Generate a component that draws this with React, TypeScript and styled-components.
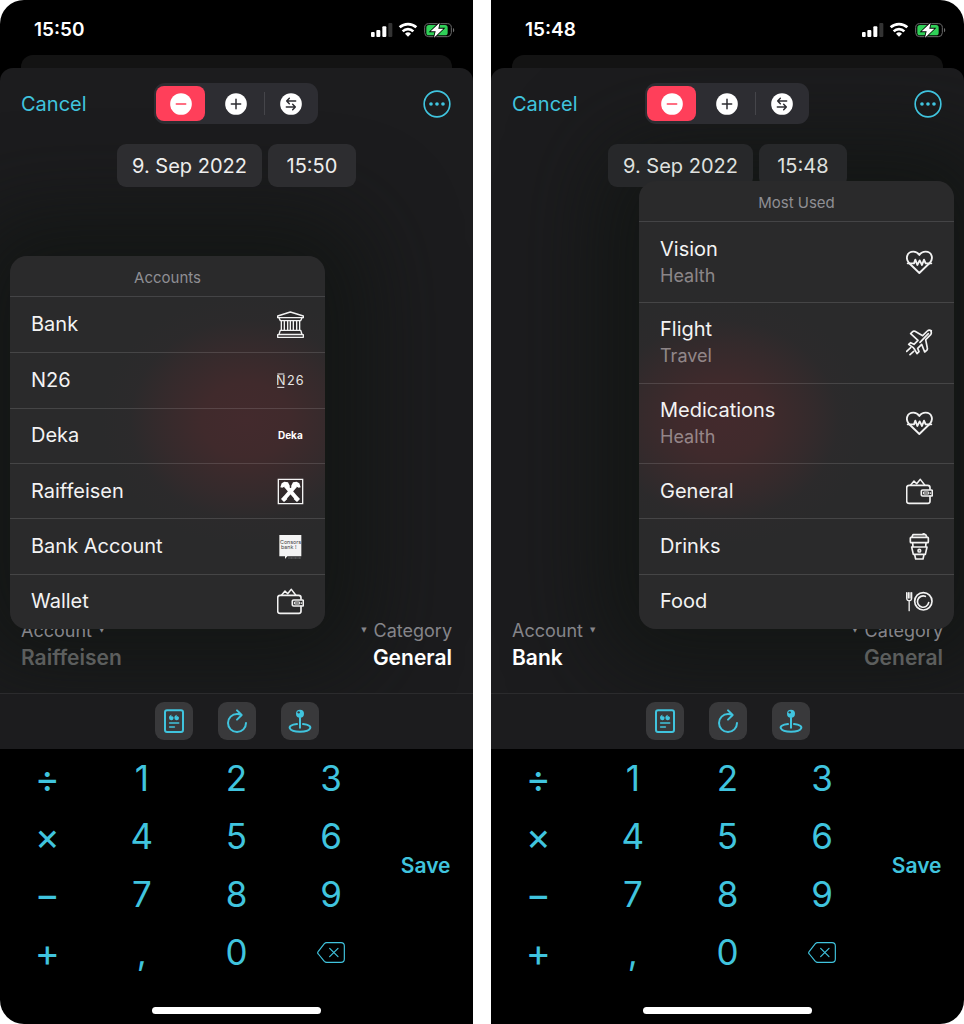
import React from "react";
import styled, { createGlobalStyle } from "styled-components";

const GlobalStyle = createGlobalStyle`
  * { box-sizing: border-box; }
  body {
    margin: 0;
    background: #fff;
    font-family: Inter, "Liberation Sans", sans-serif;
    -webkit-font-smoothing: antialiased;
  }
  button {
    margin: 0;
    padding: 0;
    border: 0;
    background: none;
    font: inherit;
    color: inherit;
    cursor: pointer;
  }
  svg { display: block; flex: none; }
`;

const ACCENT = "#40c4de";

const Page = styled.main`
  display: grid;
  grid-template-columns: 1fr 1fr;
  gap: 18px;
  min-height: 100vh;
`;

const Phone = styled.section<{ $side: "left" | "right" }>`
  display: flex;
  flex-direction: column;
  min-width: 0;
  overflow: hidden;
  background: #000;
  color: #fff;
  border-radius: ${(p) => (p.$side === "left" ? "24px 0 0 24px" : "0 24px 24px 0")};
`;

const StatusBar = styled.header`
  display: flex;
  justify-content: space-between;
  align-items: center;
  height: 55px;
  padding: 4px 18px 0 34px;
`;

const Clock = styled.time`
  font-size: 19px;
  font-weight: 600;
`;

const BackCard = styled.div`
  height: 13px;
  margin: 0 21px;
  border-radius: 12px 12px 0 0;
  background: #131313;
`;

const Sheet = styled.div`
  position: relative;
  isolation: isolate;
  display: flex;
  flex-direction: column;
  flex: 1;
  overflow: hidden;
  border-radius: 13px 13px 0 0;
  background: #1c1c1e;
`;

const SheetHeader = styled.div`
  display: grid;
  grid-template-columns: 1fr auto 1fr;
  align-items: center;
  padding: 15px 22px 0 21px;
`;

const CancelButton = styled.button`
  justify-self: start;
  font-size: 20px;
  line-height: 24px;
  color: ${ACCENT};
`;

const MoreButton = styled.button`
  justify-self: end;
  color: ${ACCENT};
`;

const Segments = styled.div`
  display: grid;
  grid-template-columns: repeat(3, 1fr);
  gap: 6px;
  width: 164px;
  height: 41px;
  padding: 3px 2px;
  border-radius: 11px;
  background: #2d2d32;
`;

const Segment = styled.button<{ $active?: boolean; $divided?: boolean }>`
  position: relative;
  display: grid;
  place-items: center;
  border-radius: 8px;
  background: ${(p) => (p.$active ? "#ff3f5a" : "none")};
  color: ${(p) => (p.$active ? "#ff3f5a" : "#2d2d32")};
  &::before {
    content: "";
    position: absolute;
    left: -3px;
    top: 6px;
    bottom: 6px;
    width: 1px;
    background: ${(p) => (p.$divided ? "#45454a" : "none")};
  }
`;

const DateRow = styled.div`
  display: flex;
  justify-content: center;
  gap: 6px;
  margin-top: 20px;
`;

const Pill = styled.button<{ $shaded: boolean }>`
  min-width: 88px;
  height: 43px;
  padding: 0 15px;
  border-radius: 9px;
  background: ${(p) => (p.$shaded ? "#27282a" : "#2d2d30")};
  font-size: 20px;
  color: ${(p) => (p.$shaded ? "#dfe0df" : "#ededed")};
`;

const Fields = styled.div`
  display: flex;
  justify-content: space-between;
  margin-top: auto;
  padding: 0 21px 22px;
`;

const FieldButton = styled.button<{ $end?: boolean }>`
  display: flex;
  flex-direction: column;
  align-items: ${(p) => (p.$end ? "flex-end" : "flex-start")};
`;

const FieldLabel = styled.span<{ $end?: boolean }>`
  display: flex;
  flex-direction: ${(p) => (p.$end ? "row-reverse" : "row")};
  align-items: center;
  gap: 7px;
  font-size: 18px;
  line-height: 27px;
  color: #85858a;
`;

const Caret = styled.span`
  font-family: "DejaVu Sans", sans-serif;
  font-size: 7px;
`;

const FieldValue = styled.span<{ $dim?: boolean }>`
  font-size: 21px;
  font-weight: 600;
  line-height: 27px;
  color: ${(p) => (p.$dim ? "#5c5e5d" : "#fff")};
`;

const Menu = styled.div<{ $side: "left" | "right"; $height: number }>`
  position: absolute;
  bottom: 64px;
  ${(p) => p.$side}: 10px;
  display: flex;
  flex-direction: column;
  width: 315px;
  height: ${(p) => p.$height}px;
  overflow: hidden;
  border-radius: 17px;
  background:
    radial-gradient(
      ellipse 145px 125px at ${(p) => (p.$side === "left" ? "236px" : "84px")} calc(100% - 209px),
      #432a2d 0%, #402a2c 30%, rgba(56, 42, 44, 0.75) 60%, rgba(46, 42, 44, 0.4) 80%, rgba(42, 42, 43, 0) 100%
    ),
    #2a2a2b;
`;

const MenuShade = styled.div<{ $side: "left" | "right"; $height: number }>`
  position: absolute;
  z-index: -1;
  bottom: 64px;
  ${(p) => p.$side}: 10px;
  width: 315px;
  height: ${(p) => p.$height}px;
  border-radius: 17px;
  box-shadow: 0 0 90px 40px rgba(16, 20, 17, 0.75);
  pointer-events: none;
`;

const MenuTitle = styled.h2`
  flex: none;
  margin: 0;
  height: 41px;
  border-bottom: 1px solid #444446;
  font-size: 15px;
  font-weight: 400;
  line-height: 43px;
  text-align: center;
  color: #8f8f94;
`;

const MenuItem = styled.button<{ $tall?: boolean }>`
  display: flex;
  flex: 1 0 ${(p) => (p.$tall ? 80 : 55)}px;
  justify-content: space-between;
  align-items: center;
  padding: 0 21px;
  text-align: left;
  & + & { border-top: 1px solid rgba(255, 255, 255, 0.13); }
`;

const MenuText = styled.span`
  display: grid;
  font-size: 20px;
  line-height: 27px;
  color: #f3f3f3;
`;

const MenuSub = styled.span`
  font-size: 18px;
  line-height: 26px;
  color: rgba(235, 225, 228, 0.52);
`;

const Toolbar = styled.div`
  display: flex;
  justify-content: center;
  gap: 25px;
  padding: 8px 0 9px;
  border-top: 1px solid #2b2b2d;
  background: #1c1c1e;
`;

const ToolButton = styled.button`
  width: 38px;
  height: 38px;
  border-radius: 9px;
  background: #39393b;
  color: ${ACCENT};
`;

const Keypad = styled.div`
  display: grid;
  grid-template-columns: repeat(5, 1fr);
  grid-auto-rows: 58px;
  color: ${ACCENT};
`;

const Key = styled.button<{ $operator?: boolean }>`
  display: grid;
  place-items: center;
  font-size: ${(p) => (p.$operator ? 38 : 35)}px;
  line-height: 58px;
`;

const SaveKey = styled.button`
  grid-column: 5;
  grid-row: 1 / span 4;
  font-size: 21px;
  font-weight: 600;
`;

const HomeArea = styled.footer`
  display: flex;
  justify-content: center;
  padding: 26px 0 10px;
`;

const HomeBar = styled.div`
  width: 169px;
  height: 7px;
  border-radius: 4px;
  background: #fff;
`;

/* ---------- icons ---------- */

const StatusIcons = () => (
  <svg width="85" height="18" viewBox="0 0 255 54" aria-hidden="true">
    <g fill="#fff">
      <rect x="3" y="33" width="11" height="15" rx="3" />
      <rect x="19" y="27" width="12" height="21" rx="3" />
      <rect x="37" y="16" width="12" height="32" rx="3" />
      <rect x="55" y="6" width="12" height="42" rx="3" fill="#333" />
    </g>
    <g fill="none" stroke="#fff" strokeWidth="8">
      <path d="M89 19a37 37 0 0 1 50 0" />
      <path d="M98 31a23 23 0 0 1 32 0" />
    </g>
    <path d="M105 38a13 13 0 0 1 18 0l-9 9z" fill="#fff" />
    <rect x="164" y="8" width="80" height="39" rx="12" fill="none" stroke="#6c6c6c" strokeWidth="3" />
    <path d="M249 21v13c5-2 5-11 0-13z" fill="#6c6c6c" />
    <rect x="169" y="12" width="64" height="31" rx="8" fill="#30d158" />
    <path d="M209 5L182 31h15l-5 19 28-27h-15z" fill="#fff" stroke="#000" strokeWidth="5" paintOrder="stroke" />
  </svg>
);

const MoreIcon = () => (
  <svg width="28" height="28" viewBox="0 0 84 84" aria-hidden="true">
    <circle cx="42" cy="42" r="38.500" fill="none" stroke="currentColor" strokeWidth="5" />
    <g fill="currentColor">
      <circle cx="24" cy="42" r="5.500" />
      <circle cx="42" cy="42" r="5.500" />
      <circle cx="60" cy="42" r="5.500" />
    </g>
  </svg>
);

const SegmentIcon = ({ d }: { d: string }) => (
  <svg width="22" height="22" viewBox="0 0 66 66" aria-hidden="true">
    <circle cx="33" cy="33" r="32.500" fill="#fff" />
    <path d={d} fill="none" stroke="currentColor" strokeWidth="4.500" strokeLinecap="round" strokeLinejoin="round" />
  </svg>
);

const Glyph = ({ children, width = 4 }: { children: React.ReactNode; width?: number }) => (
  <svg
    width="27"
    height="27"
    viewBox="0 0 81 81"
    fill="none"
    stroke="#f2f2f2"
    strokeWidth={width}
    strokeLinejoin="round"
    strokeLinecap="round"
    aria-hidden="true"
  >
    {children}
  </svg>
);

const BankIcon = () => (
  <Glyph width={4}>
    <path d="M40 3L2 15v5h77v-5z M6 21l4 8h61l4-8" />
    <path d="M13 29v28M22 29v28M32 29v28M40 29v28M49 29v28M59 29v28M68 29v28" />
    <path d="M10 58h61l4 12H6z M2 71h77v8H2z" />
  </Glyph>
);

const N26Icon = () => (
  <Glyph>
    <path d="M1 21h21M1 61h21" strokeWidth="3" strokeLinecap="butt" />
    <g fill="#e6e6e6" stroke="none" fontFamily="Inter, sans-serif" fontSize="38">
      <text x="-3" y="55">N</text>
      <text x="30" y="55">2</text>
      <text x="56" y="55">6</text>
    </g>
  </Glyph>
);

const DekaIcon = () => (
  <Glyph>
    <text x="40" y="51" textAnchor="middle" fill="#fff" stroke="none" fontFamily="Inter, sans-serif" fontWeight="700" fontSize="30">
      Deka
    </text>
  </Glyph>
);

const RaiffeisenIcon = () => (
  <Glyph width={4}>
    <path d="M4 4h73v73H4z" strokeLinejoin="miter" />
    <path d="M25 22l38 44M56 22L18 66" stroke="#fff" strokeWidth="12" strokeLinecap="butt" />
    <path
      d="M10 28l4-12 8-5 11 2 6 12-9 9-6-9-8 4zM71 28l-4-12-8-5-11 2-6 12 9 9 6-9 8 4zM12 63l10-9 9 9-10 9zM69 63l-10-9-9 9 10 9z"
      fill="#fff"
      stroke="none"
    />
  </Glyph>
);

const ConsorsIcon = () => (
  <Glyph>
    <path d="M7 6h66v64H31l-7 8v-8H7z" fill="#f4f4f4" stroke="none" />
    <path d="M34 75h38" stroke="#77787a" strokeWidth="3" strokeDasharray="3 1" strokeLinecap="butt" />
    <g fill="#444" stroke="none" fontFamily="Inter, sans-serif" fontSize="16">
      <text x="9" y="32">Consors</text>
      <text x="12" y="49">bank !</text>
    </g>
  </Glyph>
);

const WalletIcon = () => (
  <Glyph width={5}>
    <path d="M72 34v-5q0-7-7-7H9q-7 0-7 7v40q0 7 7 7h57q6 0 6-6V54" />
    <path d="M14 21l10-12 8 8 11-13 13 17" strokeWidth="4.500" />
    <path d="M50 36h26q3 0 3 3v12q0 3-3 3H50q-4 0-4-3V39q0-3 4-3z" />
    <path d="M54 42h14v6H54z M73 44v3" strokeWidth="3" />
  </Glyph>
);

const HeartIcon = () => (
  <Glyph width={5.5}>
    <path d="M40 72L9 42C-3 28 3 8 22 8c8 0 14 4 18 10C44 12 51 8 59 8c18 0 25 20 12 34z" />
    <path d="M5 43h19l4-11 6 16 7-14 7 14 6-16 5 11h17" />
  </Glyph>
);

const PlaneIcon = () => (
  <Glyph width={5}>
    <path d="M76 5q-7-4-12 1L50 20 27 7q-4-2-7 1l-6 6 22 20-12 12-10-5-6 5 14 10 3 4 8 14 6-6-4-10 12-12 9 23 6-5q3-3 2-7l-5-25 15-15q4-5 0-12z" />
    <path d="M67 14L42 40M2 67l12-11M12 77l11-10" />
  </Glyph>
);

const CupIcon = () => (
  <Glyph width={5}>
    <path d="M17 13l4-8h38l4 8M15 13h50q2 0 2 3v10q0 3-2 3H15q-2 0-2-3V16q0-3 2-3zM50 4l4-2" />
    <path d="M20 30l1 11M60 30l-1 11M17 42h46l-5 22H22zM26 65l3 13h22l3-13" />
    <circle cx="40" cy="53" r="4" />
  </Glyph>
);

const FoodIcon = () => (
  <Glyph width={5}>
    <path d="M2 14v16q0 7 6 8h3q6-1 6-8V14M7 14v16M12 14v16M9.500 38v30" strokeWidth="4" />
    <circle cx="52" cy="40" r="26" />
    <path d="M58 25a17 17 0 1 0 10 19" />
  </Glyph>
);

const ToolGlyph = ({ children }: { children: React.ReactNode }) => (
  <svg width="38" height="38" viewBox="0 0 114 114" fill="none" stroke="currentColor" strokeWidth="6" strokeLinecap="round" strokeLinejoin="round" aria-hidden="true">
    {children}
  </svg>
);

const NoteIcon = () => (
  <ToolGlyph>
    <rect x="30" y="25" width="54" height="65" rx="6" />
    <path d="M44 63h27M44 75h14" strokeWidth="5" />
    <path
      d="M56 48a7 7 0 1 1-14-1c0-5 4-9 9-9l-4 5c5-1 9 1 9 5zM72 48a7 7 0 1 1-14-1c0-5 4-9 9-9l-4 5c5-1 9 1 9 5z"
      fill="currentColor"
      stroke="none"
    />
  </ToolGlyph>
);

const RepeatIcon = () => (
  <ToolGlyph>
    <path d="M84 63a27 27 0 1 1-27-27q7 0 13 3M57 25l14 14-14 14" />
  </ToolGlyph>
);

const PinIcon = () => (
  <ToolGlyph>
    <circle cx="57" cy="35" r="12" fill="currentColor" stroke="none" />
    <circle cx="53" cy="31" r="3.500" fill="#39393b" stroke="none" />
    <path d="M57 47v30M48 66C12 70 24 89 57 89s45-19 9-23" />
  </ToolGlyph>
);

const BackspaceIcon = () => (
  <svg width="28" height="21" viewBox="0 0 84 63" fill="none" stroke="currentColor" strokeWidth="3.500" strokeLinecap="round" strokeLinejoin="round" aria-hidden="true">
    <path d="M29 2h43q10 0 10 10v39q0 10-10 10H29q-4 0-7-3L4 36q-4-4 0-8L22 5q3-3 7-3zM38 19l25 25M63 19L38 44" />
  </svg>
);

/* ---------- data ---------- */

type Entry = { label: string; sub?: string; icon: React.ReactNode };

const accounts: Entry[] = [
  { label: "Bank", icon: <BankIcon /> },
  { label: "N26", icon: <N26Icon /> },
  { label: "Deka", icon: <DekaIcon /> },
  { label: "Raiffeisen", icon: <RaiffeisenIcon /> },
  { label: "Bank Account", icon: <ConsorsIcon /> },
  { label: "Wallet", icon: <WalletIcon /> },
];

const categories: Entry[] = [
  { label: "Vision", sub: "Health", icon: <HeartIcon /> },
  { label: "Flight", sub: "Travel", icon: <PlaneIcon /> },
  { label: "Medications", sub: "Health", icon: <HeartIcon /> },
  { label: "General", icon: <WalletIcon /> },
  { label: "Drinks", icon: <CupIcon /> },
  { label: "Food", icon: <FoodIcon /> },
];

const keys = ["÷", "1", "2", "3", "×", "4", "5", "6", "−", "7", "8", "9", "+", ",", "0"];

type ScreenProps = {
  side: "left" | "right";
  time: string;
  account: string;
  title: string;
  entries: Entry[];
  menuHeight: number;
};

const Screen = ({ side, time, account, title, entries, menuHeight }: ScreenProps) => (
  <Phone $side={side}>
    <StatusBar>
      <Clock>{time}</Clock>
      <StatusIcons />
    </StatusBar>
    <BackCard />
    <Sheet>
      <MenuShade $side={side} $height={menuHeight} />
      <SheetHeader>
        <CancelButton>Cancel</CancelButton>
        <Segments role="group" aria-label="Transaction type">
          <Segment $active aria-pressed="true" aria-label="Expense">
            <SegmentIcon d="M19 33h28" />
          </Segment>
          <Segment aria-pressed="false" aria-label="Income">
            <SegmentIcon d="M19 33h28M33 19v28" />
          </Segment>
          <Segment $divided aria-pressed="false" aria-label="Transfer">
            <SegmentIcon d="M47 24H20M28 16l-8 8 8 8M19 42h27M38 34l8 8-8 8" />
          </Segment>
        </Segments>
        <MoreButton aria-label="More">
          <MoreIcon />
        </MoreButton>
      </SheetHeader>
      <DateRow>
        <Pill $shaded={side === "right"}>9. Sep 2022</Pill>
        <Pill $shaded={side === "right"}>{time}</Pill>
      </DateRow>
      <Fields>
        <FieldButton aria-haspopup="menu">
          <FieldLabel>
            Account <Caret>▼</Caret>
          </FieldLabel>
          <FieldValue $dim={side === "left"}>{account}</FieldValue>
        </FieldButton>
        <FieldButton $end aria-haspopup="menu">
          <FieldLabel $end>
            Category <Caret>▼</Caret>
          </FieldLabel>
          <FieldValue $dim={side === "right"}>General</FieldValue>
        </FieldButton>
      </Fields>
      <Menu $side={side} $height={menuHeight}>
        <MenuTitle>{title}</MenuTitle>
        {entries.map((e) => (
          <MenuItem key={e.label} $tall={!!e.sub}>
            <MenuText>
              {e.label}
              {e.sub && <MenuSub>{e.sub}</MenuSub>}
            </MenuText>
            {e.icon}
          </MenuItem>
        ))}
      </Menu>
    </Sheet>
    <Toolbar>
      <ToolButton aria-label="Note"><NoteIcon /></ToolButton>
      <ToolButton aria-label="Repeat"><RepeatIcon /></ToolButton>
      <ToolButton aria-label="Location"><PinIcon /></ToolButton>
    </Toolbar>
    <Keypad>
      <SaveKey>Save</SaveKey>
      {keys.map((k) => (
        <Key key={k} $operator={"÷×−+".includes(k)}>{k}</Key>
      ))}
      <Key aria-label="Delete"><BackspaceIcon /></Key>
    </Keypad>
    <HomeArea>
      <HomeBar />
    </HomeArea>
  </Phone>
);

export default function App() {
  return (
    <>
      <GlobalStyle />
      <Page>
        <Screen side="left" time="15:50" account="Raiffeisen" title="Accounts" entries={accounts} menuHeight={373} />
        <Screen side="right" time="15:48" account="Bank" title="Most Used" entries={categories} menuHeight={448} />
      </Page>
    </>
  );
}
